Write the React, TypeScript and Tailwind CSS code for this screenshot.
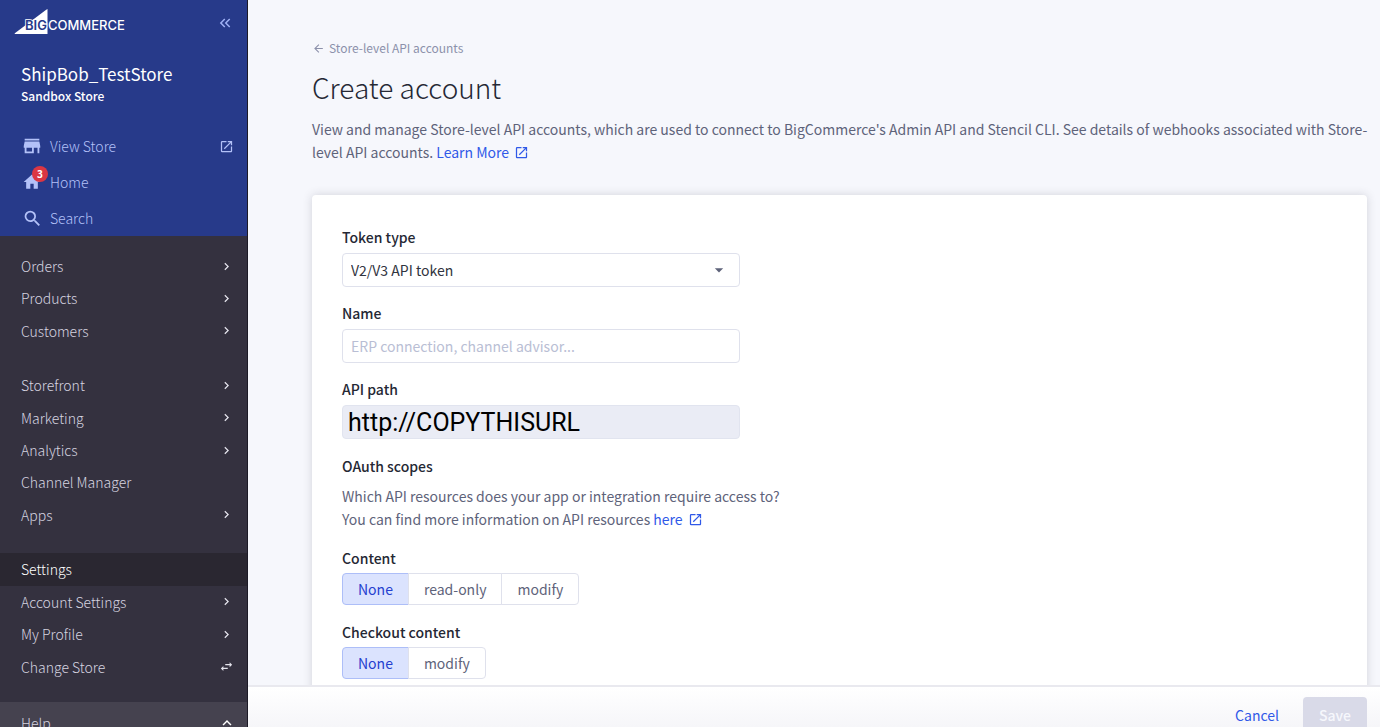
import { useState, type ReactNode } from "react";
import {
  MdArrowBack,
  MdArrowDropDown,
  MdChevronRight,
  MdExpandLess,
  MdHome,
  MdKeyboardDoubleArrowLeft,
  MdOpenInNew,
  MdSearch,
  MdStore,
  MdSwapHoriz,
} from "react-icons/md";

type NavEntry = { label: string; icon?: "chevron" | "swap"; active?: boolean };

const orderNav: NavEntry[] = [
  { label: "Orders", icon: "chevron" },
  { label: "Products", icon: "chevron" },
  { label: "Customers", icon: "chevron" },
];

const channelNav: NavEntry[] = [
  { label: "Storefront", icon: "chevron" },
  { label: "Marketing", icon: "chevron" },
  { label: "Analytics", icon: "chevron" },
  { label: "Channel Manager" },
  { label: "Apps", icon: "chevron" },
];

const settingsNav: NavEntry[] = [
  { label: "Settings", active: true },
  { label: "Account Settings", icon: "chevron" },
  { label: "My Profile", icon: "chevron" },
  { label: "Change Store", icon: "swap" },
];

function Logo() {
  return (
    <svg viewBox="0 0 112 26" className="h-[26px] w-[112px]" role="img" aria-label="BigCommerce">
      <path d="M33.5 0.6V25H1.2Q0 25 0.8 24.2L32.2 0.8Q33.5 0 33.5 0.6Z" fill="#fff" />
      <text
        x="11"
        y="21"
        fontFamily="Inter, sans-serif"
        fontSize="13"
        fontWeight="600"
        fill="#273a8a"
        stroke="#fff"
        strokeWidth="1.6"
        paintOrder="stroke"
      >
        BIG
      </text>
      <text x="34" y="21" fontFamily="Inter, sans-serif" fontSize="13" fontWeight="500" fill="#fff">
        COMMERCE
      </text>
    </svg>
  );
}

function NavGroup({ items, className }: { items: NavEntry[]; className: string }) {
  return (
    <ul className={`flex shrink-0 flex-col ${className}`}>
      {items.map((item) => (
        <li key={item.label} className="flex flex-1">
          <a
            href="#"
            className={
              item.active
                ? "flex flex-1 items-center justify-between bg-[#2a2731] pr-[13px] pl-[21px] text-white"
                : "flex flex-1 items-center justify-between pr-[13px] pl-[21px] text-[#d6d4e0]"
            }
          >
            {item.label}
            {item.icon === "chevron" && <MdChevronRight size={15} className="text-[#e4e3ec]" />}
            {item.icon === "swap" && <MdSwapHoriz size={15} className="text-[#e4e3ec]" />}
          </a>
        </li>
      ))}
    </ul>
  );
}

function QuickLink({ icon, label, end }: { icon: ReactNode; label: string; end?: ReactNode }) {
  return (
    <a href="#" className="flex h-9 items-center pr-[13px] pl-[21px] text-[#b3c1f8]">
      <span className="relative flex w-[22px] justify-center">{icon}</span>
      <span className="ml-[7px] flex-1">{label}</span>
      {end}
    </a>
  );
}

function Sidebar() {
  return (
    <aside className="flex w-[248px] shrink-0 flex-col overflow-hidden border-r border-[#1c1a26] bg-[#34313f] text-[14px] leading-5 font-light">
      <div className="shrink-0 bg-[#273a8a]">
        <div className="flex h-[128px] flex-col">
          <div className="flex items-start justify-between pt-[9px] pr-[13px] pl-[14px]">
            <Logo />
            <button type="button" aria-label="Collapse menu" className="pt-[5px] text-[#9fb1f5]">
              <MdKeyboardDoubleArrowLeft size={18} />
            </button>
          </div>
          <div className="mt-[27px] pl-[21px] text-white">
            <p className="text-[17px] leading-6 font-normal">ShipBob_TestStore</p>
            <p className="text-[12px] leading-5 font-medium">Sandbox Store</p>
          </div>
        </div>
        <QuickLink icon={<MdStore size={22} />} label="View Store" end={<MdOpenInNew size={15} />} />
        <QuickLink
          icon={
            <>
              <MdHome size={20} />
              <span className="absolute -top-[6px] left-[11px] flex size-4 items-center justify-center rounded-full bg-[#db3643] text-[10px] leading-4 font-bold text-white">
                3
              </span>
            </>
          }
          label="Home"
        />
        <QuickLink icon={<MdSearch size={21} />} label="Search" />
      </div>
      <nav className="flex shrink-0 flex-col gap-[22px] pt-[14px] pb-[19px]">
        <NavGroup items={orderNav} className="h-[97px]" />
        <NavGroup items={channelNav} className="h-[162px]" />
        <NavGroup items={settingsNav} className="h-[130px]" />
      </nav>
      <button
        type="button"
        className="flex h-[42px] shrink-0 items-center justify-between bg-[#45424f] pr-[11px] pl-[21px] text-[#d6d4e0]"
      >
        Help
        <MdExpandLess size={18} className="text-white" />
      </button>
    </aside>
  );
}

function ExternalLink({ children }: { children: ReactNode }) {
  return (
    <a href="#" className="text-[#3059e8]">
      {children}
      <MdOpenInNew size={15} className="ml-[5px] inline-block align-[-2px]" />
    </a>
  );
}

function ScopePicker({ label, name, options }: { label: string; name: string; options: string[] }) {
  const [value, setValue] = useState(options[0]);
  return (
    <fieldset>
      <legend className="font-medium leading-6 text-[#252834]">{label}</legend>
      <div className="mt-[3px] flex h-8">
        {options.map((option) => (
          <label
            key={option}
            className={
              option === value
                ? "-mr-px flex cursor-pointer items-center border border-[#adbef8] bg-[#dbe3fe] px-[15px] text-[#2440cf] first:rounded-l last:rounded-r"
                : "-mr-px flex cursor-pointer items-center border border-[#dfe1ec] bg-white px-[15px] text-[#5e637a] first:rounded-l last:rounded-r"
            }
          >
            <input
              type="radio"
              name={name}
              value={option}
              checked={option === value}
              onChange={() => setValue(option)}
              className="sr-only"
            />
            {option}
          </label>
        ))}
      </div>
    </fieldset>
  );
}

export default function App() {
  return (
    <div className="flex h-screen overflow-hidden bg-[#f6f7fc] font-['Noto_Sans_CJK_SC',sans-serif]">
      <Sidebar />
      <div className="flex min-w-0 flex-1 flex-col">
        <main className="min-h-0 flex-1 overflow-hidden pt-[38px] pl-16 text-[14px] text-[#5e637a]">
          <a href="#" className="flex items-center gap-1 text-[12px] leading-5 text-[#8c91ab]">
            <MdArrowBack size={13} />
            Store-level API accounts
          </a>
          <h1 className="mt-[9px] text-[28px] leading-10 font-light text-[#252834]">Create account</h1>
          <p className="mt-[11px] leading-[23px]">
            View and manage Store-level API accounts, which are used to connect to BigCommerce's Admin API and Stencil
            CLI. See details of webhooks associated with Store-level API accounts.{" "}
            <ExternalLink>Learn More</ExternalLink>
          </p>
          <section className="mt-[31px] mr-[13px] rounded bg-white px-[30px] pt-[30px] pb-16 shadow-[0_0_10px_rgba(49,52,64,0.18)]">
            <div className="flex w-[398px] flex-col gap-[14px]">
              <div>
                <label htmlFor="token-type" className="block leading-6 font-medium text-[#252834]">
                  Token type
                </label>
                <div className="relative mt-1">
                  <select
                    id="token-type"
                    className="h-[34px] w-full appearance-none rounded border border-[#dfe1ec] bg-white px-2 text-[#313440]"
                  >
                    <option>V2/V3 API token</option>
                  </select>
                  <MdArrowDropDown
                    size={20}
                    className="pointer-events-none absolute top-[7px] right-[11px] text-[#5e637a]"
                  />
                </div>
              </div>
              <div>
                <label htmlFor="account-name" className="block leading-6 font-medium text-[#252834]">
                  Name
                </label>
                <input
                  id="account-name"
                  type="text"
                  placeholder="ERP connection, channel advisor..."
                  className="mt-1 block h-[34px] w-full rounded border border-[#dfe1ec] bg-white px-2 placeholder:text-[#b9bed4]"
                />
              </div>
              <div>
                <label htmlFor="api-path" className="block leading-6 font-medium text-[#252834]">
                  API path
                </label>
                <input
                  id="api-path"
                  type="text"
                  readOnly
                  value="http://COPYTHISURL"
                  className="mt-1 block h-[34px] w-full rounded border border-[#e1e4ef] bg-[#eaecf5] px-[5px] pt-[2px] font-[Roboto,sans-serif] text-[25px] text-black"
                />
              </div>
            </div>
            <h2 className="mt-[15px] leading-6 font-medium text-[#252834]">OAuth scopes</h2>
            <p className="mt-[7px] mb-[15px] leading-[23px]">
              Which API resources does your app or integration require access to?
              <br />
              You can find more information on API resources <ExternalLink>here</ExternalLink>
            </p>
            <div className="flex flex-col gap-[15px]">
              <ScopePicker label="Content" name="content" options={["None", "read-only", "modify"]} />
              <ScopePicker label="Checkout content" name="checkout-content" options={["None", "modify"]} />
            </div>
          </section>
        </main>
        <footer className="flex h-[42px] shrink-0 items-start justify-end gap-6 overflow-hidden border-t-2 border-[#e9e9ef] bg-linear-to-b from-white to-[#f6f6f9] pt-[10px] pr-[13px] text-[14px]">
          <button type="button" className="h-9 text-[#3059e8]">
            Cancel
          </button>
          <button type="button" disabled className="h-9 rounded bg-[#d9dae8] px-4 font-medium text-[#f6f7fc]">
            Save
          </button>
        </footer>
      </div>
    </div>
  );
}
